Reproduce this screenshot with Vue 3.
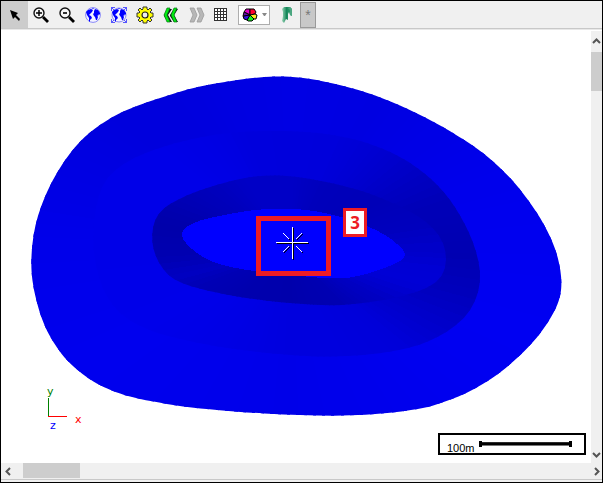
<script setup>
const center = [290, 250]

// Contour rings of the pit, from the crest down to the floor.
const crest = [[31,264],[32,245],[35,225],[41,206],[49,187],[61,165],[79,141],[100,124],[125,110],[150,101],[175,93],[200,86],[225,82],[250,78],[275,76],[300,77],[333,83],[367,92],[400,105],[433,121],[467,141],[490,158],[509,176],[528,199],[545,225],[556,249],[561,271],[562,289],[558,305],[549,321],[538,337],[519,357],[500,373],[483,384],[467,393],[450,400],[433,406],[413,410],[390,413],[367,415],[334,416],[300,415],[267,414],[217,410],[183,407],[150,401],[130,397],[110,390],[97,384],[83,375],[66,360],[57,348],[49,335],[42,320],[36,300],[32,280]]
const bench = [[90,249],[97,194],[110,173],[133,157],[167,145],[200,137],[233,132],[285,130],[333,134],[367,142],[400,156],[418,168],[434,181],[451,200],[467,227],[476,250],[481,272],[479,293],[469,314],[453,328],[433,340],[408,349],[370,355],[330,357],[300,356],[233,350],[167,337],[130,323],[105,300]]
const slope = [[152,238],[153,225],[158,214],[167,205],[183,197],[200,190],[233,180],[255,176],[278,175],[300,177],[333,183],[367,192],[400,206],[418,216],[434,228],[444,243],[447,260],[443,277],[427,289],[400,297],[367,303],[333,306],[300,304],[267,301],[233,296],[200,289],[180,283],[166,274],[157,260],[153,248]]
const floor = [[181,238],[182,231],[187,226],[200,220],[215,217],[233,213],[260,209],[290,208],[317,211],[343,217],[367,226],[385,234],[400,246],[407,254],[402,261],[385,268],[367,274],[350,278],[333,279],[300,276],[267,273],[233,268],[210,262],[193,251]]

// Blue level by compass angle, clockwise from the right-hand side.
const rings = [
  { id: 'crest', points: crest, shades: [[0,240],[20,242],[60,236],[90,233],[150,238],[180,234],[200,226],[215,221],[232,221],[248,225],[270,228],[300,225],[320,230],[340,236],[360,240]] },
  { id: 'bench', points: bench, shades: [[0,178],[12,188],[22,200],[40,218],[65,222],[90,222],[150,234],[180,232],[215,232],[230,228],[250,221],[290,219],[310,210],[325,198],[340,184],[360,178]] },
  { id: 'slope', points: slope, shades: [[0,204],[6,212],[14,214],[25,196],[45,178],[90,172],[135,174],[158,182],[166,194],[175,178],[190,170],[205,182],[235,198],[270,198],[295,188],[330,184],[348,190],[360,204]] }
]

// Closed cubic B-spline guided by the points.
function smooth(points) {
  const n = points.length
  const at = i => points[(i + n) % n]
  const mix = (...terms) => [0, 1].map(k => terms.reduce((sum, [w, p]) => sum + w * p[k], 0) / 6)
  const knot = i => mix([1, at(i - 1)], [4, at(i)], [1, at(i + 1)])
  let d = `M${knot(0)}`
  for (let i = 0; i < n; i++) {
    d += `C${mix([4, at(i)], [2, at(i + 1)])} ${mix([2, at(i)], [4, at(i + 1)])} ${knot(i + 1)}`
  }
  return d + 'Z'
}

function facets(shades) {
  const out = []
  const step = 3
  for (let a = 0; a < 360; a += step) {
    const i = shades.findIndex(s => s[0] > a)
    const [a0, v0] = shades[i - 1]
    const [a1, v1] = shades[i]
    const level = Math.round(v0 + ((v1 - v0) * (a - a0)) / (a1 - a0))
    const at = deg => {
      const r = (deg * Math.PI) / 180
      return `${center[0] + 400 * Math.cos(r)},${center[1] + 400 * Math.sin(r)}`
    }
    out.push({ d: `M${center}L${at(a)}L${at(a + step + 1)}Z`, fill: `rgb(0,0,${level})` })
  }
  return out
}

const layers = rings.map(r => ({ id: r.id, outline: smooth(r.points), facets: facets(r.shades) }))
const floorPath = smooth(floor)
const star = 'M276 242.5H308M292.5 227V259M283 233L289 239M296 246L302 252M302 233L296 239M289 246L283 252'
const land = 'M1 5L3 3L6 2L8 3L7 5L6 6L5 7L4 8L6 9L7 11L5 13L5 15L4 14L4 11L2 8ZM7 1L9 1L8 2ZM9 4L10 2L13 3L15 6L15 8L14 7L13 9L12 8L13 10L12 13L11 13L10 10L9 9L8 7L9 6Z'
</script>

<template>
  <main class="window">
    <nav class="toolbar" aria-label="View tools">
      <button class="tool pointer" aria-label="Select">
        <svg viewBox="0 0 16 16"><path d="M3 3L11 6L9 8L13 12L12 14L8 10L6 12Z" fill="#000" /></svg>
      </button>
      <button class="tool" aria-label="Zoom in">
        <svg viewBox="0 0 16 16"><circle cx="6" cy="6" r="5" fill="#f6f6f6" stroke="#111" stroke-width="1.4" /><path d="M3 6H9M6 3V9" stroke="#000" stroke-width="1.5" /><path d="M10 10L15 15" stroke="#000" stroke-width="2.8" /></svg>
      </button>
      <button class="tool" aria-label="Zoom out">
        <svg viewBox="0 0 16 16"><circle cx="6" cy="6" r="5" fill="#f6f6f6" stroke="#111" stroke-width="1.4" /><path d="M4 6H8" stroke="#000" stroke-width="1.6" /><path d="M10 10L15 15" stroke="#000" stroke-width="2.8" /></svg>
      </button>
      <button class="tool" aria-label="View all">
        <svg viewBox="0 0 16 16"><circle cx="8" cy="8" r="7.4" fill="#f4f4ff" stroke="#7c7cf8" stroke-width=".9" /><path :d="land" fill="#00f" /></svg>
      </button>
      <button class="tool" aria-label="Fit to window">
        <svg viewBox="0 0 16 16"><circle cx="8" cy="8" r="7" fill="#f4f4ff" stroke="#7c7cf8" stroke-width=".9" /><path :d="land" fill="#00f" /><path d="M.5 4V.5H4M12 .5H15.500V4M15.500 12V15.500H12M4 15.500H.5V12M0 0L3 3M16 0L13 3M0 16L3 13M16 16L13 13" fill="none" stroke="#55f" /></svg>
      </button>
      <button class="tool" aria-label="Settings">
        <svg viewBox="0 0 16 16"><path d="M6 2L6 0H10V2L11 3L13 1L15 3L13 5L14 6H16V10H14L13 11L15 13L13 15L11 13L10 14V16H6V14L5 13L3 15L1 13L3 11L2 10H0V6H2L3 5L1 3L3 1L5 3Z" fill="#ff0" stroke="#333" /><circle cx="8" cy="8" r="3" fill="#efefef" stroke="#222" stroke-width="1.2" /></svg>
      </button>
      <button class="tool" aria-label="Previous view">
        <svg viewBox="0 0 16 16"><g fill="#0e0e18" transform="translate(1 1)"><path d="M4 1H8L4 7L8 14H4L0 8V7Z" /><path d="M10 1H14L10 7L14 14H10L6 8V7Z" /></g><path d="M4 1H7L4 8L7 15H4L1 8Z" fill="#00ed10" stroke="#087018" stroke-width=".7" /><path d="M11 1H14L11 8L14 15H11L8 8Z" fill="#00ed10" stroke="#087018" stroke-width=".7" /></svg>
      </button>
      <button class="tool" aria-label="Next view">
        <svg viewBox="0 0 16 16"><path d="M1 1H5L8 8L5 15H1L4 8ZM8 1H12L15 8L12 15H8L11 8Z" fill="#b7b7b7" stroke="#9b9b9b" stroke-width=".8" /></svg>
      </button>
      <button class="tool" aria-label="Grid">
        <svg viewBox="0 0 16 16" shape-rendering="crispEdges"><path d="M-1 1H12V14H-1Z" fill="#fff" /><path d="M-1 1.5H12M-1 4.5H12M-1 7.5H12M-1 10.5H12M-1 13.5H12M-.5 1V14M2.500 1V14M5.500 1V14M8.500 1V14M11.500 1V14" stroke="#333" /></svg>
      </button>
      <button class="palette" aria-label="Colour legend" aria-haspopup="menu">
        <svg class="wheel" viewBox="0 0 16 16"><g stroke="#000" stroke-width="1" stroke-linejoin="round"><path d="M8 8L2 5L4 2L8 2Z" fill="#e000c8" /><path d="M8 8L8 2L12 2L14 5L13 7Z" fill="#ff0030" /><path d="M8 8L13 7L15 8L14 12L12 12Z" fill="#ffe820" /><path d="M8 8L12 12L10 14L6 14L5 13Z" fill="#10f020" /><path d="M8 8L5 13L2 12L1 9Z" fill="#3018d8" /><path d="M8 8L1 9L2 5Z" fill="#6010a8" /></g></svg>
        <svg class="caret" viewBox="0 0 5 3"><path d="M0 0H5L3 3H2Z" fill="#888" /></svg>
      </button>
      <button class="tool ribbon" aria-label="Bookmark">
        <svg viewBox="0 0 16 16"><defs><linearGradient id="leaf"><stop offset="0" stop-color="#9ad4b6" /><stop offset=".45" stop-color="#16875a" /><stop offset="1" stop-color="#3aa578" /></linearGradient></defs><path d="M3 2L5 0H11L13 2V9L11 8L10 5L9 7V13L7 12L5 16L3 14L4 9V5Z" fill="url(#leaf)" /><path d="M9 1L11 0L13 2V9L11 8V3Z" fill="#4ba680" /></svg>
      </button>
      <button class="more" aria-label="More tools">*</button>
    </nav>

    <section class="view" aria-label="Pit plan">
      <svg class="scene" viewBox="1 30 590 433">
        <defs>
          <clipPath v-for="l in layers" :id="`clip-${l.id}`" :key="l.id"><path :d="l.outline" /></clipPath>
        </defs>
        <g v-for="l in layers" :key="l.id" :clip-path="`url(#clip-${l.id})`" shape-rendering="crispEdges">
          <path v-for="(f, i) in l.facets" :key="i" :d="f.d" :fill="f.fill" />
        </g>
        <path :d="floorPath" fill="#00f" shape-rendering="crispEdges" />
        <g fill="none" shape-rendering="crispEdges">
          <path :d="star" stroke="#000" transform="translate(1 1)" />
          <path :d="star" stroke="#fff" />
          <rect x="258.5" y="218.5" width="70" height="55" stroke="#ed1c24" stroke-width="5" />
        </g>
        <rect x="344.5" y="209.5" width="21" height="26" fill="#fff" stroke="#ed1c24" stroke-width="3" shape-rendering="crispEdges" />
        <text class="callout" x="355" y="229" text-anchor="middle">3</text>
      </svg>

      <svg class="axes" viewBox="0 0 40 50">
        <path d="M3.5 12V31" stroke="#008000" />
        <path d="M3 30.5H22" stroke="#f00" />
        <text x="2" y="9" fill="#008000">y</text>
        <text x="30" y="37" fill="#f00">x</text>
        <text x="5" y="43" fill="#00f">z</text>
      </svg>

      <div class="scale">
        <span>100m</span>
        <i class="bar"></i>
      </div>
    </section>

    <div class="vscroll">
      <button aria-label="Scroll up"><svg viewBox="0 0 9 9"><path d="M1 6L4.500 2.500L8 6" /></svg></button>
      <div class="thumb"></div>
      <button class="end" aria-label="Scroll down"><svg viewBox="0 0 9 9"><path d="M1 3L4.500 6.500L8 3" /></svg></button>
    </div>

    <div class="hscroll">
      <button aria-label="Scroll left"><svg viewBox="0 0 9 9"><path d="M6 1L2.500 4.500L6 8" /></svg></button>
      <div class="thumb"></div>
      <button class="end" aria-label="Scroll right"><svg viewBox="0 0 9 9"><path d="M3 1L6.500 4.500L3 8" /></svg></button>
    </div>
    <footer class="edge"></footer>
  </main>
</template>

<style>
body {
  margin: 0;
  background: #fff;
}
</style>

<style scoped>
.window {
  box-sizing: border-box;
  height: 100vh;
  border: 1px solid #000;
  display: grid;
  grid-template: auto minmax(0, 1fr) 16px 3px / minmax(0, 1fr) 11px;
  background: #fff;
  font-family: "Liberation Sans", Arial, sans-serif;
}
button {
  border: 0;
  padding: 0;
  margin: 0;
  background: none;
  display: flex;
  align-items: center;
  justify-content: center;
}
.toolbar {
  grid-column: 1 / -1;
  display: flex;
  align-items: center;
  height: 27px;
  background: #f0f0f0;
  border-bottom: 1px solid #c8c8c8;
  box-shadow: 0 1px #e8e8e8;
  margin-bottom: 1px;
}
.tool {
  width: 26px;
  height: 27px;
}
.tool svg {
  width: 16px;
  height: 16px;
  overflow: visible;
}
.pointer {
  width: 27px;
  background: #ccc;
}
.palette {
  box-sizing: border-box;
  width: 32px;
  height: 20px;
  margin-left: 2px;
  gap: 4px;
  background: #fff;
  border: 1px solid #adadad;
}
.wheel {
  width: 16px;
  height: 16px;
}
.caret {
  width: 5px;
  height: 3px;
}
.ribbon {
  margin-left: 4px;
}
.more {
  box-sizing: border-box;
  width: 16px;
  height: 26px;
  background: #c8c8c8;
  border: 1px solid #999;
  color: #777;
  font: 14px "Liberation Sans", Arial, sans-serif;
}
.view {
  position: relative;
  min-height: 0;
}
.scene {
  display: block;
  width: 100%;
  height: 100%;
}
.callout {
  font: bold 17px "Open Sans", sans-serif;
  fill: #ed1c24;
}
.axes {
  position: absolute;
  left: 44px;
  bottom: 27px;
  width: 40px;
  height: 50px;
  overflow: visible;
  font: 11px "DejaVu Sans", sans-serif;
}
.scale {
  position: absolute;
  right: 5px;
  bottom: 8px;
  box-sizing: border-box;
  width: 148px;
  height: 22px;
  padding: 0 12px 0 7px;
  border: 2px solid #000;
  background: #fff;
  display: flex;
  align-items: center;
  gap: 4px;
  font-size: 11px;
  line-height: 12px;
}
.scale span {
  padding-top: 8px;
}
.bar {
  flex: 1;
  box-sizing: border-box;
  height: 6px;
  border: solid #000;
  border-width: 0 3px;
  background: linear-gradient(transparent 1px, #555 1px, #000 2px, #000 4px, #777 4px, #777 5px, transparent 5px);
}
.vscroll,
.hscroll {
  display: flex;
  background: #f0f0f0;
}
.vscroll {
  flex-direction: column;
  margin-top: 1px;
}
.hscroll {
  grid-column: 1 / -1;
}
.vscroll button {
  height: 21px;
}
.vscroll .thumb {
  height: 39px;
  background: #cdcdcd;
}
.vscroll .end {
  height: 17px;
  margin-top: auto;
}
.hscroll button {
  width: 14px;
}
.hscroll .thumb {
  width: 57px;
  margin: 0 8px;
  height: 15px;
  background: #cdcdcd;
}
.hscroll .end {
  width: 12px;
  margin-left: auto;
}
.vscroll svg,
.hscroll svg {
  width: 9px;
  height: 9px;
  fill: none;
  stroke: #555;
  stroke-width: 2px;
}
.edge {
  grid-column: 1 / -1;
  border-top: 1px solid #c8c8c8;
  background: #f0f0f0;
}
</style>
